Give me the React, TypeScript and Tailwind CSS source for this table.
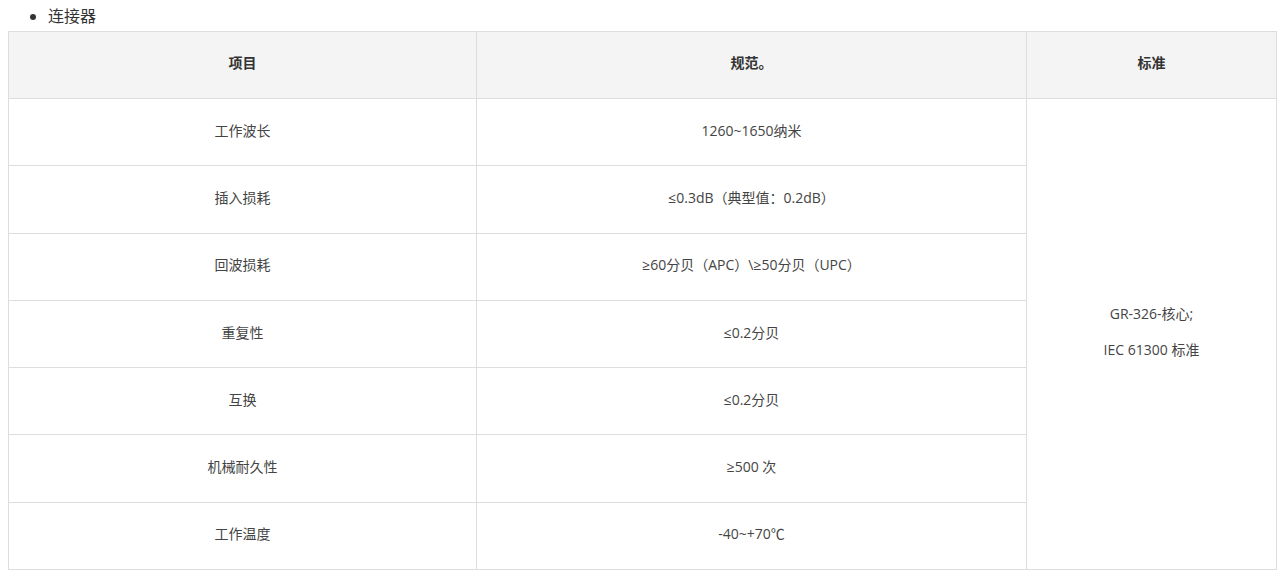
import React from "react";

const rows: [string, string][] = [
  ["工作波长", "1260~1650纳米"],
  ["插入损耗", "≤0.3dB（典型值：0.2dB）"],
  ["回波损耗", "≥60分贝（APC）\\≥50分贝（UPC）"],
  ["重复性", "≤0.2分贝"],
  ["互换", "≤0.2分贝"],
  ["机械耐久性", "≥500 次"],
  ["工作温度", "-40~+70℃"],
];

export default function App() {
  return (
    <div
      className="bg-white w-[1284px] h-[575px] overflow-hidden px-2 pt-[4px] text-[#333]"
      style={{ fontFamily: '"Open Sans", "Noto Sans CJK SC", sans-serif' }}
    >
      <ul className="list-disc pl-[40px] mb-[3px] text-[16px] leading-[24px] text-[#333]">
        <li>连接器</li>
      </ul>
      <table className="w-[1268px] border-collapse text-[14px] table-fixed">
        <colgroup>
          <col className="w-[468px]" />
          <col className="w-[550px]" />
          <col className="w-[250px]" />
        </colgroup>
        <thead>
          <tr className="h-[67px] bg-[#f4f4f4]">
            <th className="border border-[#dddddd] pb-[5px] font-bold text-[#333] text-center align-middle">项目</th>
            <th className="border border-[#dddddd] pb-[5px] font-bold text-[#333] text-center align-middle">规范。</th>
            <th className="border border-[#dddddd] pb-[5px] font-bold text-[#333] text-center align-middle">标准</th>
          </tr>
        </thead>
        <tbody>
          {rows.map(([a, b], i) => (
            <tr key={i} className="h-[67.3px]">
              <td className="border border-[#dddddd] pb-[4px] text-center align-middle text-[#444]">{a}</td>
              <td className="border border-[#dddddd] pb-[4px] text-center align-middle text-[#444]">{b}</td>
              {i === 0 && (
                <td rowSpan={7} className="border border-[#dddddd] pb-[4px] text-center align-middle text-[#444]">
                  <div className="flex flex-col items-center gap-[14px] leading-[22px]">
                    <p>GR-326-核心;</p>
                    <p>IEC 61300 标准</p>
                  </div>
                </td>
              )}
            </tr>
          ))}
        </tbody>
      </table>
    </div>
  );
}
